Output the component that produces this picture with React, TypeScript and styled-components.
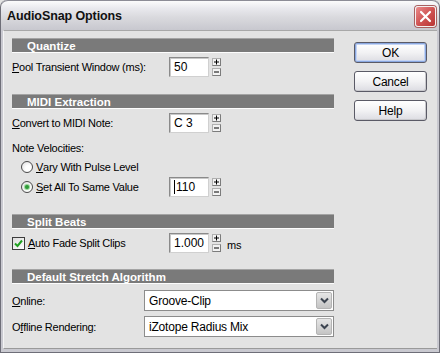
import React from 'react';
import styled, { createGlobalStyle } from 'styled-components';

const GlobalStyle = createGlobalStyle`
  html, body {
    margin: 0;
    padding: 0;
    background: #e3e3e3;
  }
  body {
    font-family: 'Liberation Sans', Arial, sans-serif;
    font-size: 11px;
    color: #000;
  }
`;

const Window = styled.div`
  display: flex;
  flex-direction: column;
  width: 440px;
  height: 353px;
  box-sizing: border-box;
  background: #c9c9d0;
  border: 1px solid #6e6e78;
  border-top: none;
  border-radius: 7px 7px 0 0;
  overflow: hidden;
`;

const TitleBar = styled.div`
  display: flex;
  align-items: center;
  justify-content: space-between;
  height: 29px;
  padding: 0 3px 0 6px;
  background: linear-gradient(
    #fbfbfc 0%,
    #e9e9ee 25%,
    #dadade 55%,
    #c8c8cf 100%
  );
  border-top: 1px solid #8c8c96;
  border-radius: 7px 7px 0 0;
`;

const Title = styled.div`
  font-size: 12.5px;
  font-weight: bold;
  color: #111;
  letter-spacing: -0.1px;
`;

const CloseButton = styled.div`
  display: flex;
  align-items: center;
  justify-content: center;
  width: 21px;
  height: 21px;
  box-sizing: border-box;
  margin-top: 1px;
  border: 1px solid #f4f0f0;
  border-radius: 3px;
  background: linear-gradient(135deg, #ea8c8c 0%, #d05454 50%, #b83434 100%);
  box-shadow: 0 0 0 1px #a86060;
`;

const Client = styled.div`
  flex: 1;
  display: flex;
  margin: 0 2px 3px 2px;
  background: #e3e3e3;
  border-top: 1px solid #a8a8a8;
  border-left: 1px solid #f4f4f4;
  border-bottom: 1px solid #9a9a9a;
`;

const Form = styled.div`
  display: flex;
  flex-direction: column;
  width: 322px;
  padding: 7px 0 0 8px;
`;

const SectionBar = styled.div<{ $top?: number }>`
  display: flex;
  align-items: center;
  height: 14px;
  margin-top: ${(p) => p.$top ?? 0}px;
  padding-left: 15px;
  background: #7a7a7a;
  border-top: 1px solid #a4a4a4;
  box-sizing: border-box;
  box-shadow: 0 1px 0 #fdfdfd;
  color: #fff;
  font-size: 11.5px;
  font-weight: bold;
`;

const Row = styled.div<{ $top?: number; $height?: number }>`
  display: flex;
  align-items: center;
  height: ${(p) => p.$height ?? 20}px;
  margin-top: ${(p) => p.$top ?? 0}px;
`;

const Label = styled.div<{ $width?: number; $indent?: number }>`
  display: flex;
  align-items: center;
  width: ${(p) => p.$width ?? 157}px;
  padding-left: ${(p) => p.$indent ?? 0}px;
  box-sizing: border-box;
  letter-spacing: -0.25px;
  white-space: nowrap;
  & u {
    text-decoration-thickness: 1px;
    text-underline-offset: 1px;
  }
`;

const TextBox = styled.div`
  display: flex;
  align-items: center;
  width: 40px;
  height: 20px;
  box-sizing: border-box;
  padding-left: 4px;
  background: #fff;
  border: 1px solid #8a8a8a;
  border-right-color: #d0d0d0;
  border-bottom-color: #d0d0d0;
  box-shadow: inset 1px 1px 0 #c8c8c8;
  font-size: 12px;
`;

const Caret = styled.span`
  display: inline-block;
  width: 1px;
  height: 14px;
  margin-right: 1px;
  background: #000;
`;

const SpinColumn = styled.div`
  display: flex;
  flex-direction: column;
  justify-content: space-between;
  height: 18px;
  margin-left: 3px;
`;

const SpinButton = styled.div`
  display: flex;
  align-items: center;
  justify-content: center;
  width: 9px;
  height: 8px;
  box-sizing: border-box;
  background: #f2f2f2;
  border: 1px solid #b0b0b0;
  border-right-color: #7c7c7c;
  border-bottom-color: #7c7c7c;
`;

const Unit = styled.div`
  margin: 3px 0 0 6px;
  letter-spacing: -0.2px;
`;

const RadioCircle = styled.div<{ $checked?: boolean }>`
  display: flex;
  align-items: center;
  justify-content: center;
  width: 12px;
  height: 12px;
  box-sizing: border-box;
  margin-right: 3px;
  border-radius: 50%;
  border: 1px solid #4a4a4a;
  background: radial-gradient(circle at 65% 65%, #ffffff 30%, #dcdcdc 100%);
  &::after {
    content: '';
    display: ${(p) => (p.$checked ? 'block' : 'none')};
    width: 4px;
    height: 4px;
    border-radius: 50%;
    background: #2e9a38;
    box-shadow: 0 0 1px 1px #8cd08c;
  }
`;

const CheckBox = styled.div`
  display: flex;
  align-items: center;
  justify-content: center;
  width: 13px;
  height: 13px;
  box-sizing: border-box;
  margin-right: 3px;
  border: 1px solid #3c3c3c;
  background: linear-gradient(135deg, #dcdcdc, #ffffff);
`;

const Select = styled.div`
  display: flex;
  align-items: center;
  justify-content: space-between;
  width: 190px;
  height: 21px;
  box-sizing: border-box;
  padding: 1px 1px 1px 4px;
  background: #fff;
  border: 1px solid #8c8c8c;
  font-size: 12px;
  letter-spacing: -0.2px;
`;

const SelectArrow = styled.div`
  display: flex;
  align-items: center;
  justify-content: center;
  width: 16px;
  height: 17px;
  box-sizing: border-box;
  background: linear-gradient(#e6e6e6, #c4c4c4);
  border: 1px solid #b4b4b4;
  border-radius: 2px;
`;

const ButtonColumn = styled.div`
  display: flex;
  flex-direction: column;
  gap: 8px;
  padding: 11px 0 0 20px;
`;

const DialogButton = styled.div<{ $default?: boolean }>`
  display: flex;
  align-items: center;
  justify-content: center;
  width: 73px;
  height: 21px;
  box-sizing: border-box;
  border: 1px solid #5a5a66;
  border-radius: 3px;
  background: linear-gradient(#ffffff 0%, #f2f2f4 50%, #dcdce2 100%);
  box-shadow: ${(p) =>
    p.$default ? 'inset 0 0 0 1px #8aa8e0, inset 0 0 0 2px #c4d4f4' : 'inset -1px -1px 0 #c8c8cc'};
  font-size: 12px;
  letter-spacing: -0.2px;
`;

const Spinner = ({ value, caret }: { value: string; caret?: boolean }) => (
  <>
    <TextBox>
      {caret && <Caret />}
      {value}
    </TextBox>
    <SpinColumn>
      <SpinButton>
        <svg width="7" height="6" viewBox="0 0 7 6">
          <path d="M1 3H6M3.5 0.5V5.5" stroke="#000" strokeWidth="1" />
        </svg>
      </SpinButton>
      <SpinButton>
        <svg width="7" height="6" viewBox="0 0 7 6">
          <path d="M1 3H6" stroke="#000" strokeWidth="1" />
        </svg>
      </SpinButton>
    </SpinColumn>
  </>
);

const Dropdown = ({ value }: { value: string }) => (
  <Select>
    <span>{value}</span>
    <SelectArrow>
      <svg width="9" height="7" viewBox="0 0 9 7">
        <path d="M1 1.5L4.5 5L8 1.5" stroke="#3c4450" strokeWidth="2" fill="none" />
      </svg>
    </SelectArrow>
  </Select>
);

const App = () => (
  <>
    <GlobalStyle />
    <Window>
      <TitleBar>
        <Title>AudioSnap Options</Title>
        <CloseButton>
          <svg width="13" height="13" viewBox="0 0 13 13">
            <path d="M2 2L11 11M11 2L2 11" stroke="#fff" strokeWidth="2.2" strokeLinecap="round" />
          </svg>
        </CloseButton>
      </TitleBar>
      <Client>
        <Form>
          <SectionBar>Quantize</SectionBar>
          <Row $top={5}>
            <Label>
              <u>P</u>ool Transient Window (ms):
            </Label>
            <Spinner value="50" />
          </Row>

          <SectionBar $top={17}>MIDI Extraction</SectionBar>
          <Row $top={5}>
            <Label>
              <u>C</u>onvert to MIDI Note:
            </Label>
            <Spinner value="C 3" />
          </Row>
          <Row $top={8} $height={14}>
            <Label>Note Velocities:</Label>
          </Row>
          <Row $top={3} $height={18}>
            <Label $indent={9}>
              <RadioCircle />
              <u>V</u>ary With Pulse Level
            </Label>
          </Row>
          <Row $top={1}>
            <Label $indent={9}>
              <RadioCircle $checked />
              <u>S</u>et All To Same Value
            </Label>
            <Spinner value="110" caret />
          </Row>

          <SectionBar $top={17}>Split Beats</SectionBar>
          <Row $top={5}>
            <Label>
              <CheckBox>
                <svg width="9" height="9" viewBox="0 0 9 9">
                  <path d="M1 4.5L3.5 7L8 1.5" stroke="#21a121" strokeWidth="2" fill="none" />
                </svg>
              </CheckBox>
              <u>A</u>uto Fade Split Clips
            </Label>
            <Spinner value="1.000" />
            <Unit>ms</Unit>
          </Row>

          <SectionBar $top={16}>Default Stretch Algorithm</SectionBar>
          <Row $top={7} $height={21}>
            <Label $width={132}>
              <u>O</u>nline:
            </Label>
            <Dropdown value="Groove-Clip" />
          </Row>
          <Row $top={5} $height={21}>
            <Label $width={132}>
              O<u>f</u>fline Rendering:
            </Label>
            <Dropdown value="iZotope Radius Mix" />
          </Row>
        </Form>
        <ButtonColumn>
          <DialogButton $default>OK</DialogButton>
          <DialogButton>Cancel</DialogButton>
          <DialogButton>Help</DialogButton>
        </ButtonColumn>
      </Client>
    </Window>
  </>
);

export default App;
